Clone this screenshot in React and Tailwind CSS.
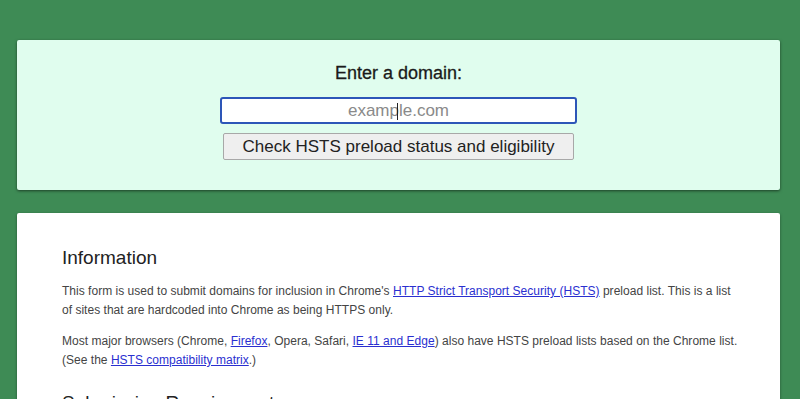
import React from 'react';

// Carte du formulaire + carte d'information, sur fond vert
export default function App() {
  return (
    <div className="min-h-screen bg-[#3e8b55] pl-[17px] pr-[20px] pt-10 pb-10 font-['Liberation_Sans',Arial,sans-serif] text-[#222]">
      {/* Formulaire */}
      <div className="bg-[#e0fdee] rounded-[2px] shadow-[0_1px_3px_rgba(0,0,0,0.55)] flex flex-col items-center pt-[22px] pb-[30px]">
        <div className="text-[18px] leading-[22px] text-[#1a1a1a] [-webkit-text-stroke:0.3px_#1a1a1a]">Enter a domain:</div>
        <div className="relative mt-[13px]">
          <input
            type="text"
            placeholder="example.com"
            className="w-[357px] h-[27px] bg-white border-2 border-[#2d56b8] rounded-[3px] text-center text-[17px] text-[#222] placeholder:text-[#8a8a8a] outline-none"
          />
          <span className="absolute left-[177px] top-[6px] w-px h-[17px] bg-[#222]"></span>
        </div>
        <button className="mt-[9px] w-[351px] h-[27px] bg-[#efefef] border border-[#a8a8a8] rounded-[2px] text-[17px] leading-none text-[#222]">
          Check HSTS preload status and eligibility
        </button>
      </div>

      {/* Information */}
      <div className="mt-[23px] bg-white rounded-[2px] shadow-[0_1px_3px_rgba(0,0,0,0.4)] pl-[45px] pr-[40px] pt-[33px] pb-10">
        <h2 className="text-[19px] leading-6 text-[#222]">Information</h2>
        <p className="mt-[12px] text-[12px] tracking-[0.02px] leading-[19px] text-[#444]">
          This form is used to submit domains for inclusion in Chrome's{' '}
          <a href="#" className="text-[#2a2fd0] underline">HTTP Strict Transport Security (HSTS)</a>{' '}
          preload list. This is a list of sites that are hardcoded into Chrome as being HTTPS only.
        </p>
        <p className="mt-[12px] text-[12px] tracking-[0.02px] leading-[19px] text-[#444]">
          Most major browsers (Chrome, <a href="#" className="text-[#2a2fd0] underline">Firefox</a>, Opera, Safari,{' '}
          <a href="#" className="text-[#2a2fd0] underline">IE 11 and Edge</a>) also have HSTS preload lists based on the Chrome list.
          (See the <a href="#" className="text-[#2a2fd0] underline">HSTS compatibility matrix</a>.)
        </p>
        <h2 className="mt-[21px] text-[19px] leading-6 text-[#222]">Submission Requirements</h2>
      </div>
    </div>
  );
}
